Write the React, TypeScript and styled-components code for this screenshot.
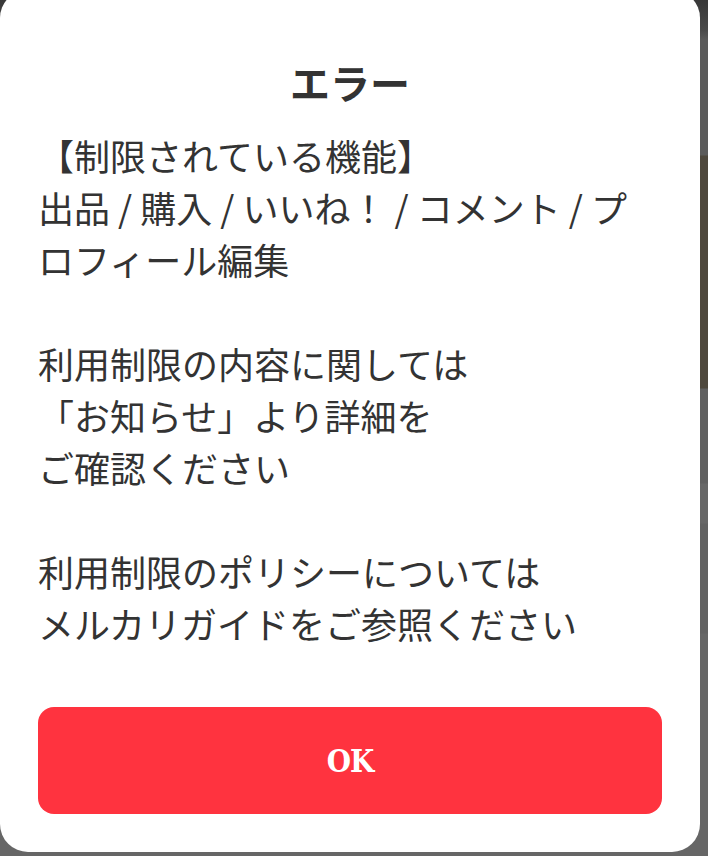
import React from "react";
import styled, { createGlobalStyle } from "styled-components";

const GlobalStyle = createGlobalStyle`
    html, body {
        margin: 0;
        padding: 0;
        overflow: hidden;
    }
    body {
        font-family: "Noto Sans CJK JP", "Noto Sans", sans-serif;
    }
`;

// dimmed page behind the dialog: only a thin strip shows on the right
const Backdrop = styled.div`
    width: 708px;
    height: 856px;
    overflow: hidden;
    display: flex;
    align-items: flex-start;
    background: linear-gradient(
        to bottom,
        #383838 0px,
        #4a4a4a 30px,
        #5b5b5b 40px,
        #5b5b5b 155px,
        #4e483d 156px,
        #4e483d 388px,
        #606060 389px,
        #606060 483px,
        #676767 484px,
        #676767 523px,
        #626262 524px,
        #626262 633px,
        #666666 634px
    );
`;

const Dialog = styled.div`
    width: 700px;
    margin-top: -10px;
    box-sizing: border-box;
    padding: 66px 38px 38px;
    background: #ffffff;
    border-radius: 28px;
    display: flex;
    flex-direction: column;
`;

const Title = styled.h2`
    margin: 0;
    font-size: 40px;
    line-height: 52px;
    font-weight: 700;
    color: #333333;
    text-align: center;
`;

const Message = styled.p`
    margin: 21px 0 0;
    font-size: 36px;
    line-height: 52px;
    font-weight: 400;
    color: #333333;
    white-space: pre-wrap;
    word-break: break-all;
`;

const OkButton = styled.button`
    margin-top: 58px;
    height: 107px;
    border: none;
    border-radius: 16px;
    background: #ff333f;
    color: #ffffff;
    font-family: "DejaVu Serif", serif;
    font-stretch: condensed;
    font-size: 31px;
    font-weight: 700;
    letter-spacing: -1px;
    cursor: pointer;
`;

const message = [
    "【制限されている機能】",
    "出品 / 購入 / いいね！ / コメント / プロフィール編集",
    "",
    "利用制限の内容に関しては",
    "「お知らせ」より詳細を",
    "ご確認ください",
    "",
    "利用制限のポリシーについては",
    "メルカリガイドをご参照ください",
].join("\n");

export default function App() {
    return (
        <>
            <GlobalStyle />
            <Backdrop>
                <Dialog role="dialog">
                    <Title>エラー</Title>
                    <Message>{message}</Message>
                    <OkButton>OK</OkButton>
                </Dialog>
            </Backdrop>
        </>
    );
}
